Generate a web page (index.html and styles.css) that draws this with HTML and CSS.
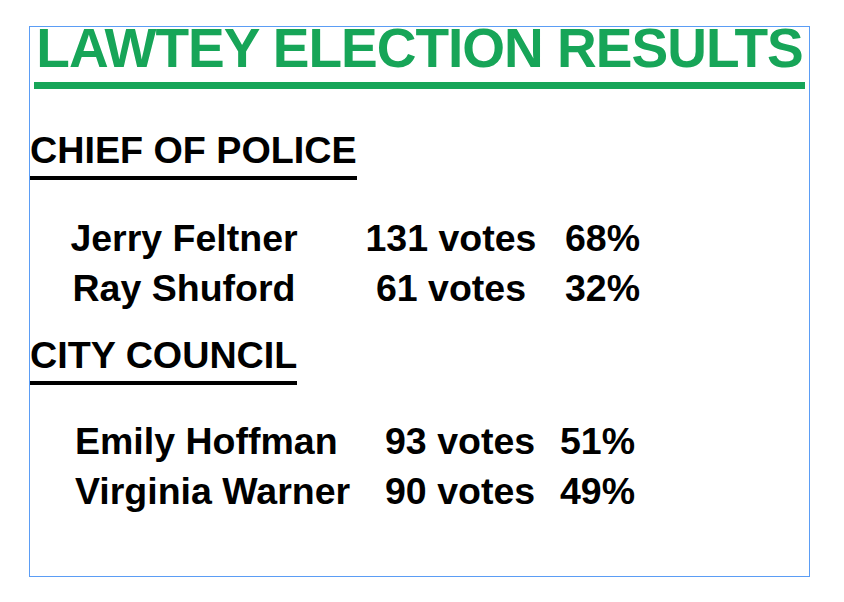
FILE: index.html
```html
<!DOCTYPE html>
<html lang="en">
<head>
<meta charset="utf-8">
<title>Lawtey Election Results</title>
<link rel="stylesheet" href="styles.css">
</head>
<body>
<div class="frame">
  <h1 class="title">LAWTEY ELECTION RESULTS</h1>

  <h2 class="race">CHIEF OF POLICE</h2>
  <div class="results results-police">
    <span class="name">Jerry Feltner</span><span class="votes">131 votes</span><span class="pct">68%</span>
    <span class="name">Ray Shuford</span><span class="votes">61 votes</span><span class="pct">32%</span>
  </div>

  <h2 class="race race-council">CITY COUNCIL</h2>
  <div class="results results-council">
    <span class="name">Emily Hoffman</span><span class="votes">93 votes</span><span class="pct">51%</span>
    <span class="name">Virginia Warner</span><span class="votes">90 votes</span><span class="pct">49%</span>
  </div>
</div>
</body>
</html>
```

FILE: styles.css
```css
html, body {
  margin: 0;
  padding: 0;
  background: #ffffff;
}

body {
  font-family: "Liberation Sans", Arial, Helvetica, sans-serif;
  font-weight: bold;
  color: #000000;
}

.frame {
  box-sizing: border-box;
  width: 781px;
  height: 551px;
  margin: 26px 0 0 29px;
  border: 1px solid #5b9df5;
  display: flex;
  flex-direction: column;
  align-items: flex-start;
}

.title {
  align-self: stretch;
  margin: 1px 4px 0 4px;
  padding-bottom: 14px;
  border-bottom: 7px solid #17a558;
  color: #17a558;
  font-size: 55px;
  line-height: 40px;
  letter-spacing: -1px;
  text-align: center;
  white-space: nowrap;
  font-weight: bold;
}

.race {
  margin: 46px 0 0 0;
  padding-bottom: 11px;
  border-bottom: 4px solid #000000;
  font-size: 37.7px;
  line-height: 30px;
  font-weight: bold;
  white-space: nowrap;
}

.race-council {
  margin-top: 27px;
}

.results {
  display: grid;
  font-size: 37.5px;
  line-height: 50px;
  white-space: nowrap;
}

.results-police {
  margin-top: 33px;
  padding-left: 1px;
  grid-template-columns: 306px 180px auto;
  column-gap: 24px;
}

.results-police .name,
.results-police .votes {
  text-align: center;
}

.results-council {
  margin-top: 31px;
  padding-left: 45px;
  grid-template-columns: 310px 175px auto;
}
```
